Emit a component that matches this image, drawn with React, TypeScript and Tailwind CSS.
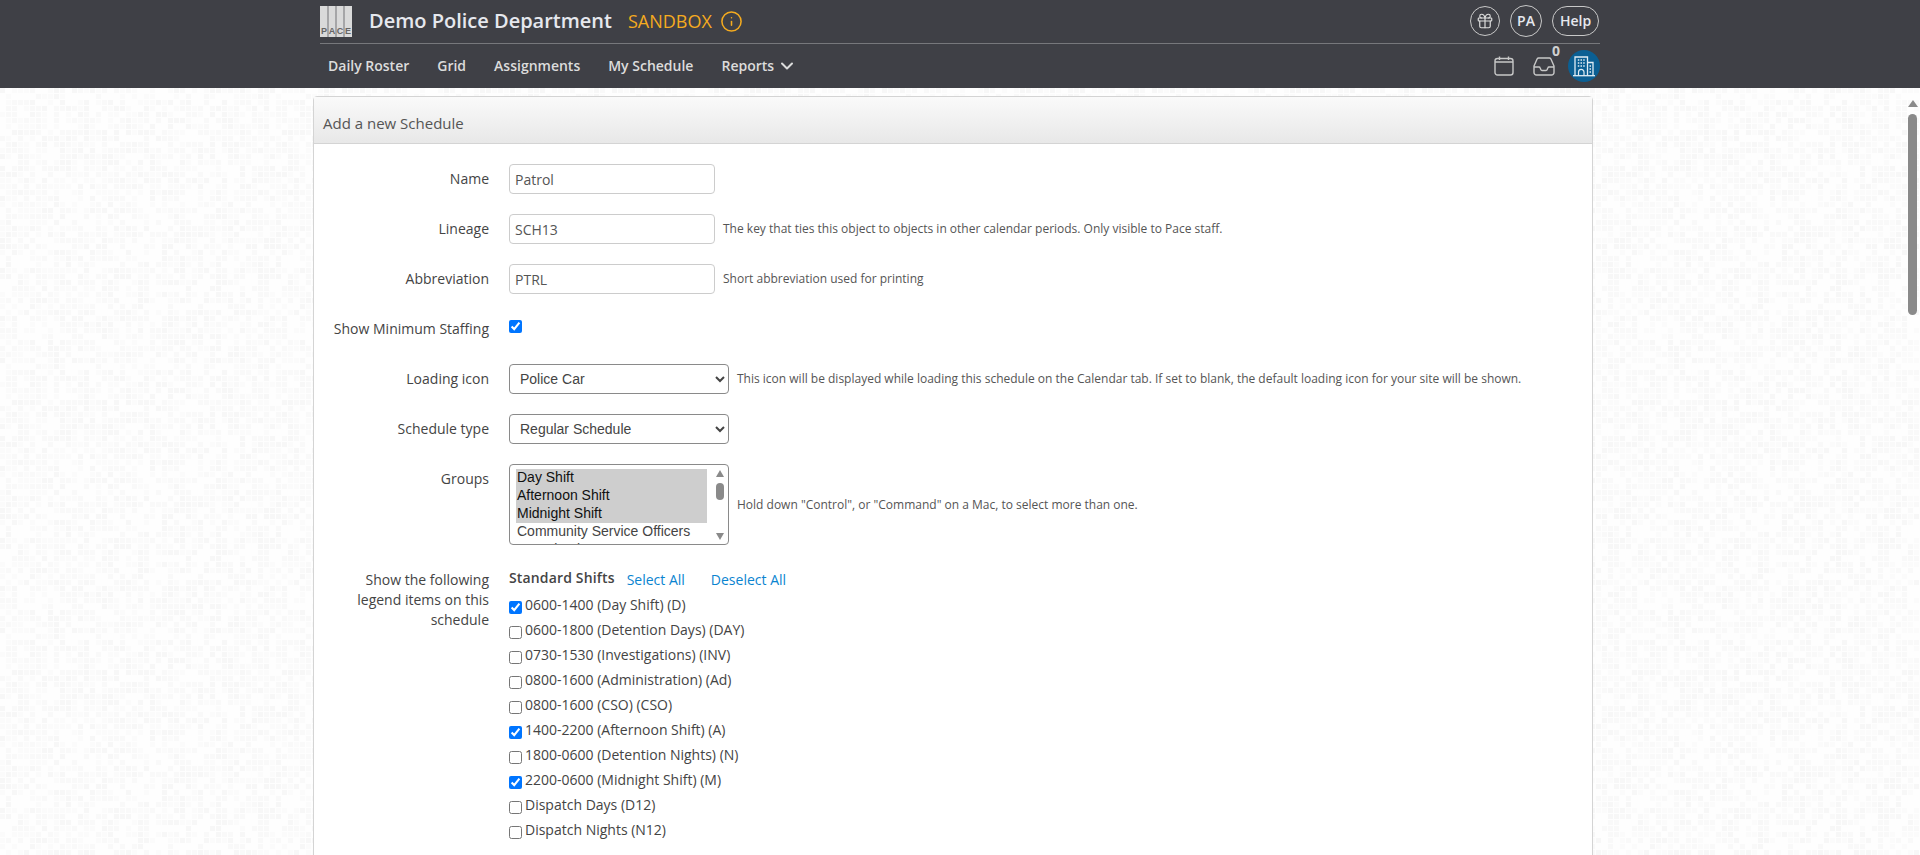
import React from "react";
import { Gift, Info, ChevronDown } from "lucide-react";

function seeded(n: number) {
  const x = Math.sin(n * 12.9898) * 43758.5453;
  return x - Math.floor(x);
}

const tiles = Array.from({ length: 2025 }, (_, i) => {
  const r = seeded(i + 1);
  if (r < 0.35) return null;
  const shade = r > 0.85 ? "#f7f7f7" : r > 0.6 ? "#f9f9f9" : "#fbfbfb";
  return { x: (i % 45) * 6, y: Math.floor(i / 45) * 6, shade };
}).filter(Boolean) as { x: number; y: number; shade: string }[];

function Mosaic() {
  return (
    <svg className="absolute inset-0 h-full w-full" aria-hidden="true">
      <defs>
        <pattern id="mosaic" width="270" height="270" patternUnits="userSpaceOnUse">
          <rect width="270" height="270" fill="#fefefe" />
          {tiles.map((t, i) => (
            <rect key={i} x={t.x} y={t.y} width="5" height="5" fill={t.shade} />
          ))}
        </pattern>
      </defs>
      <rect width="100%" height="100%" fill="url(#mosaic)" />
    </svg>
  );
}

function Logo() {
  return (
    <div className="relative h-[31px] w-[32px] bg-[#dadada]">
      <div className="absolute inset-y-0 left-[7px] w-[2px] bg-[#a6a6a8]" />
      <div className="absolute inset-y-0 left-[15px] w-[2px] bg-[#a6a6a8]" />
      <div className="absolute inset-y-0 left-[23px] w-[2px] bg-[#a6a6a8]" />
      <div className="absolute bottom-0 left-0 grid h-[10px] w-full grid-cols-4 items-center text-center font-['Liberation_Sans',sans-serif] text-[9px] leading-none font-bold text-[#666]">
        <span>P</span>
        <span>A</span>
        <span>C</span>
        <span>E</span>
      </div>
    </div>
  );
}

function Building() {
  return (
    <svg viewBox="0 0 24 24" className="h-[24px] w-[24px]" fill="none" stroke="#dfecf4" strokeWidth="1.3">
      <path d="M1 21.700h22" />
      <path d="M3 21.700V3h12.500v18.700" />
      <path d="M15.500 8.500H21v13.200" />
      <path d="M6.500 21.700v-3.500a2.700 2.700 0 0 1 5.500 0v3.500" strokeWidth="1.2" />
      <path d="M5.800 6h1.500M8.500 6h1.500M11.200 6h1.500M5.800 9h1.500M8.500 9h1.500M11.200 9h1.500M5.800 12h1.500M8.500 12h1.500M11.200 12h1.500M17.500 12h1.500M17.500 15h1.500M17.500 18h1.500" strokeWidth="1.500" />
    </svg>
  );
}

const Row = ({ label, children, hint }: { label: string; children: React.ReactNode; hint?: string }) => (
  <div className="flex items-center">
    <div className="w-[175px] shrink-0 text-right text-sm text-[#444]">{label}</div>
    <div className="ml-[20px] flex items-center">
      {children}
      {hint && <span className="ml-[8px] text-xs text-[#555]">{hint}</span>}
    </div>
  </div>
);

const Text = ({ value }: { value: string }) => (
  <input
    readOnly
    value={value}
    className="h-[30px] w-[206px] rounded-[4px] border border-[#ccc] bg-white pr-[6px] pl-[5px] text-sm text-[#555]"
  />
);

const Sel = ({ value }: { value: string }) => (
  <select
    defaultValue={value}
    className="h-[30px] w-[220px] rounded-[4px] border border-[#8a8a8a] bg-white pl-[6px] font-['Liberation_Sans',sans-serif] text-sm text-[#444]"
  >
    <option>{value}</option>
  </select>
);

const shifts: [string, boolean][] = [
  ["0600-1400 (Day Shift) (D)", true],
  ["0600-1800 (Detention Days) (DAY)", false],
  ["0730-1530 (Investigations) (INV)", false],
  ["0800-1600 (Administration) (Ad)", false],
  ["0800-1600 (CSO) (CSO)", false],
  ["1400-2200 (Afternoon Shift) (A)", true],
  ["1800-0600 (Detention Nights) (N)", false],
  ["2200-0600 (Midnight Shift) (M)", true],
  ["Dispatch Days (D12)", false],
  ["Dispatch Nights (N12)", false],
];

const nav = ["Daily Roster", "Grid", "Assignments", "My Schedule"];

export default function App() {
  return (
    <div className="flex h-screen flex-col overflow-hidden font-['Open_Sans',sans-serif]">
      <header className="h-[88px] shrink-0 bg-[#3f4046]">
        <div className="ml-[320px] w-[1280px]">
          <div className="flex h-[44px] items-center border-b border-[#77787c] pb-[1px]">
            <Logo />
            <span className="ml-[17px] text-[20px] font-semibold text-[#e6e8ee]">Demo Police Department</span>
            <span className="ml-[16px] text-[18px] text-[#f5ab1f]">SANDBOX</span>
            <Info className="ml-[8px] h-[23px] w-[23px] text-[#f5ab1f]" strokeWidth={1.6} />
            <div className="mr-[1px] ml-auto flex items-center gap-[10px]">
              <div className="flex h-[30px] w-[30px] items-center justify-center rounded-full border border-[#c8c8c8] text-[#ddd]">
                <Gift className="h-[18px] w-[18px]" strokeWidth={1.6} />
              </div>
              <div className="flex h-[32px] w-[32px] items-center justify-center rounded-full border border-[#c8c8c8] text-sm font-semibold text-[#e6e8ee]">
                PA
              </div>
              <div className="flex h-[30px] w-[47px] items-center justify-center rounded-full border border-[#c8c8c8] text-sm font-semibold text-[#e6e8ee]">
                Help
              </div>
            </div>
          </div>
          <nav className="relative flex h-[44px] items-center pl-[8px] text-sm font-semibold text-[#dcdcdc]">
            {nav.map((n) => (
              <span key={n} className="mr-[28px]">{n}</span>
            ))}
            <span>Reports</span>
            <ChevronDown className="ml-[3px] h-[20px] w-[20px]" strokeWidth={2.4} />
            <div className="ml-auto flex items-center">
              <svg viewBox="0 0 20 20" className="h-[20px] w-[20px]" fill="none" stroke="#c8c8c8" strokeWidth="1.4">
                <rect x="1" y="2.500" width="18" height="16.500" rx="2.500" />
                <path d="M1 6h18M5.500 0.500v3.500M14.500 0.500v3.500" />
              </svg>
              <div className="relative mr-[13px] ml-[19px]">
                <svg viewBox="0 0 22 19" className="h-[19px] w-[22px]" fill="none" stroke="#c8c8c8" strokeWidth="1.4" strokeLinejoin="round">
                  <path d="M5.500 1h11c.6 0 1 .3 1.300.8L21 9v6.500a2.500 2.500 0 0 1-2.500 2.500h-15A2.500 2.500 0 0 1 1 15.500V9l3.200-7.200c.3-.5.700-.8 1.300-.8z" />
                  <path d="M1 10h5c.6 0 1 .4 1.200 1l.6 1.500c.2.600.7 1 1.200 1h4c.5 0 1-.4 1.200-1l.6-1.500c.2-.6.6-1 1.200-1h5" />
                </svg>
                <span className="absolute -top-[13px] -right-[5px] text-sm leading-none font-bold text-[#d0d0d0]">0</span>
              </div>
              <div className="flex h-[32px] w-[32px] items-center justify-center rounded-full bg-[#0b5f93]">
                <Building />
              </div>
            </div>
          </nav>
        </div>
      </header>

      <main className="relative min-h-0 flex-1 overflow-hidden">
        <Mosaic />
        <section className="relative mt-[8px] ml-[313px] w-[1280px] rounded-t-[4px] border border-[#d4d4d4] bg-white">
          <h1 className="flex h-[47px] items-center border-b border-[#d4d4d4] bg-gradient-to-b from-[#fafafa] to-[#e8e8e8] pt-[6px] pl-[9px] text-[15px] text-[#555]">
            Add a new Schedule
          </h1>
          <div className="flex flex-col gap-[20px] pt-[20px] pb-[40px]">
            <Row label="Name"><Text value="Patrol" /></Row>
            <Row label="Lineage" hint="The key that ties this object to objects in other calendar periods. Only visible to Pace staff."><Text value="SCH13" /></Row>
            <Row label="Abbreviation" hint="Short abbreviation used for printing"><Text value="PTRL" /></Row>
            <div className="flex h-[30px] items-center">
              <div className="w-[175px] shrink-0 text-right text-sm text-[#444]">Show Minimum Staffing</div>
              <input type="checkbox" defaultChecked className="mb-[5px] ml-[20px] h-[13px] w-[13px]" />
            </div>
            <Row label="Loading icon" hint="This icon will be displayed while loading this schedule on the Calendar tab. If set to blank, the default loading icon for your site will be shown."><Sel value="Police Car" /></Row>
            <Row label="Schedule type"><Sel value="Regular Schedule" /></Row>
            <div className="flex items-start">
              <div className="mt-[5px] w-[175px] shrink-0 text-right text-sm text-[#444]">Groups</div>
              <div className="ml-[20px] flex items-center">
                <div className="relative">
                  <select
                    multiple
                    size={4}
                    defaultValue={["Day Shift", "Afternoon Shift", "Midnight Shift"]}
                    className="block h-[81px] w-[220px] overflow-hidden rounded-[4px] border border-[#8a8a8a] bg-white py-[4px] pr-[21px] pl-[6px] font-['Liberation_Sans',sans-serif] text-sm text-[#444] [&>option]:pb-[2px] [&>option]:pl-[1px]"
                  >
                    {["Day Shift", "Afternoon Shift", "Midnight Shift", "Community Service Officers", "Investigations", "Administration", "Dispatch"].map((o) => (
                      <option key={o} value={o}>{o}</option>
                    ))}
                  </select>
                  <div className="pointer-events-none absolute top-[6px] right-[5px] bottom-[5px] flex w-[8px] flex-col items-center">
                    <div className="h-0 w-0 border-x-[4.500px] border-b-[7px] border-x-transparent border-b-[#8a8a8a]" />
                    <div className="mt-[6px] h-[17px] w-[8px] rounded-full bg-[#8a8a8a]" />
                    <div className="mt-auto h-0 w-0 border-x-[4.500px] border-t-[7px] border-x-transparent border-t-[#8a8a8a]" />
                  </div>
                </div>
                <span className="ml-[8px] text-xs text-[#555]">Hold down "Control", or "Command" on a Mac, to select more than one.</span>
              </div>
            </div>
            <div className="flex items-start">
              <div className="mt-[5px] w-[175px] shrink-0 pl-[20px] text-right text-sm leading-[20px] text-[#444]">
                Show the following legend items on this schedule
              </div>
              <div className="ml-[20px]">
                <div className="flex h-[27px] items-start">
                  <span className="text-sm leading-[25px] font-semibold tracking-[0.15px] text-[#444]">Standard Shifts</span>
                  <span className="ml-[12px] text-sm leading-[29px] text-[#0a84d0]">Select All</span>
                  <span className="ml-[26px] text-sm leading-[29px] text-[#0a84d0]">Deselect All</span>
                </div>
                {shifts.map(([s, c]) => (
                  <div key={s} className="flex h-[25px] items-center text-sm text-[#444]">
                    <input type="checkbox" defaultChecked={c} className="mt-[6px] h-[13px] w-[13px]" />
                    <span className="ml-[3px]">{s}</span>
                  </div>
                ))}
              </div>
            </div>
          </div>
        </section>
        <div className="absolute top-[12px] right-[3px] flex w-[9px] flex-col items-center">
          <div className="h-0 w-0 border-x-[5px] border-b-[7px] border-x-transparent border-b-[#8a8a8a]" />
          <div className="mt-[7px] h-[201px] w-[9px] rounded-full bg-[#8a8a8a]" />
        </div>
      </main>
    </div>
  );
}
